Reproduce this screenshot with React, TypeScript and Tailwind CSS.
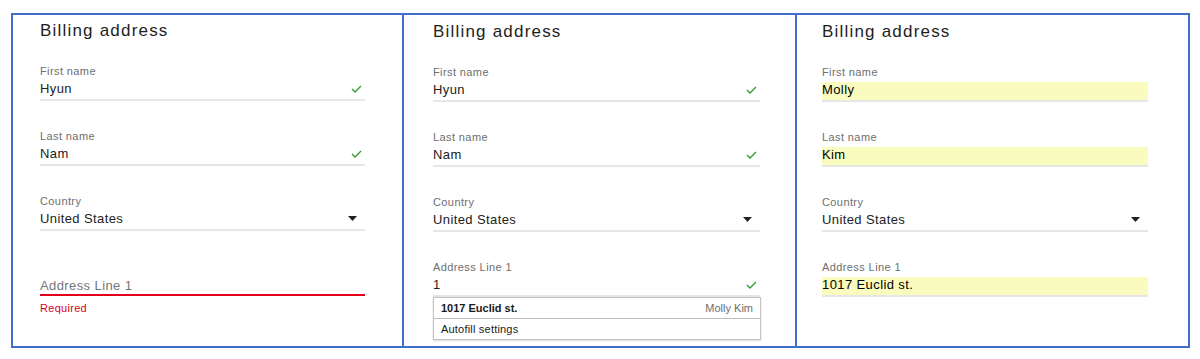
import React from "react";

const font = { fontFamily: '"Liberation Sans", Arial, Helvetica, sans-serif' };

function Check() {
  return (
    <svg width="11" height="8" viewBox="0 0 11 8" className="shrink-0 mr-[3px] -mt-[3px]">
      <polyline points="1,4 4,7 10,1" fill="none" stroke="#2e9a2e" strokeWidth="1.3" />
    </svg>
  );
}

function Caret() {
  return (
    <svg width="9" height="5" viewBox="0 0 9 5" className="shrink-0 mr-[8px] -mt-[3px]">
      <polygon points="0,0 9,0 4.5,5" fill="#222" />
    </svg>
  );
}

type FieldProps = {
  label: string;
  value: string;
  icon?: "check" | "caret" | null;
  autofill?: boolean;
  children?: React.ReactNode;
};

function Field({ label, value, icon, autofill, children }: FieldProps) {
  return (
    <div className="relative h-[65px]">
      <div className="text-[11px] leading-[13px] tracking-[0.4px] text-[#6e6e6e]">{label}</div>
      <div
        className={`mt-[3px] flex h-[20px] items-center justify-between border-b-2 border-[#e6e6e6] ${
          autofill ? "bg-[#fafcbf]" : ""
        }`}
      >
        <span
          className={`self-start text-[13px] leading-[16px] tracking-[0.4px] ${
            autofill ? "text-black" : "text-[#212121]"
          }`}
        >
          {value}
        </span>
        {icon === "check" && <Check />}
        {icon === "caret" && <Caret />}
      </div>
      {children}
    </div>
  );
}

function Heading() {
  return (
    <div className="h-[20px] text-[17px] leading-[20px] tracking-[1.2px] text-[#1e1e1e]">Billing address</div>
  );
}

export default function App() {
  return (
    <div className="bg-white w-[1200px] h-[359px] pt-[13px] pl-[11px]" style={font}>
      <div className="flex w-[1179px] h-[335px] border-2 border-[#3f6fcb]">
        {/* Panel 1 */}
        <div className="w-[391px] h-full border-r-2 border-[#3f6fcb] pl-[27px] pt-[6px]">
          <Heading />
          <div className="mt-[24px] w-[325px]">
            <Field label="First name" value="Hyun" icon="check" />
            <Field label="Last name" value="Nam" icon="check" />
            <Field label="Country" value="United States" icon="caret" />
            <div className="h-[16px]" />
            <div className="flex h-[20px] border-b-2 border-[#e2001a] pt-[2px]">
              <span className="text-[13px] leading-[16px] tracking-[0.4px] text-[#757575]">Address Line 1</span>
            </div>
            <div className="mt-[6px] text-[11px] leading-[13px] tracking-[0.3px] text-[#d8001a]">Required</div>
          </div>
        </div>

        {/* Panel 2 */}
        <div className="w-[393px] h-full border-r-2 border-[#3f6fcb] pl-[29px] pt-[7px]">
          <Heading />
          <div className="mt-[24px] w-[327px]">
            <Field label="First name" value="Hyun" icon="check" />
            <Field label="Last name" value="Nam" icon="check" />
            <Field label="Country" value="United States" icon="caret" />
            <Field label="Address Line 1" value="1" icon="check">
              <div className="absolute left-0 top-[36px] w-[328px] border border-[#c4c4c4] bg-white shadow-[0_1px_2px_rgba(0,0,0,0.15)]">
                <div className="flex h-[21px] items-center justify-between px-[7px] border-b border-[#bdbdbd]">
                  <span className="text-[11px] font-bold leading-[21px] text-[#1a1a1a]">1017 Euclid st.</span>
                  <span className="text-[11px] leading-[21px] text-[#6e6e6e]">Molly Kim</span>
                </div>
                <div className="flex h-[20px] items-center px-[7px]">
                  <span className="text-[11px] leading-[20px] tracking-[0.2px] text-[#1a1a1a]">Autofill settings</span>
                </div>
              </div>
            </Field>
          </div>
        </div>

        {/* Panel 3 */}
        <div className="flex-1 h-full pl-[25px] pt-[7px]">
          <Heading />
          <div className="mt-[24px] w-[326px]">
            <Field label="First name" value="Molly" autofill />
            <Field label="Last name" value="Kim" autofill />
            <Field label="Country" value="United States" icon="caret" />
            <Field label="Address Line 1" value="1017 Euclid st." autofill />
          </div>
        </div>
      </div>
    </div>
  );
}
